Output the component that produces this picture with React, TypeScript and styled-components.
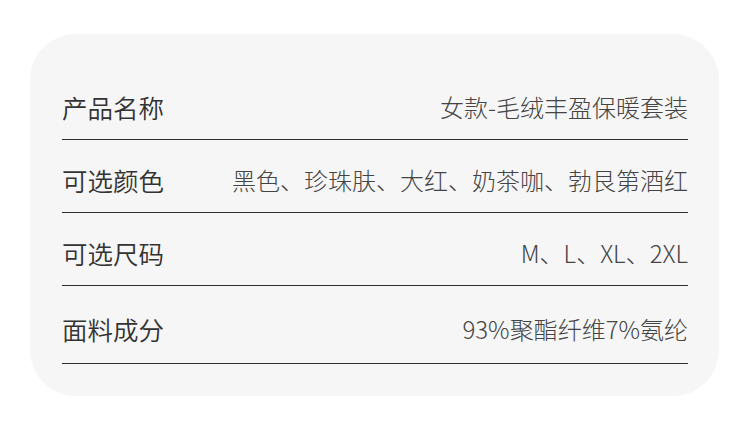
import React from "react";
import styled, { createGlobalStyle } from "styled-components";

interface SpecItem {
  label: string;
  value: string;
}

const specs: SpecItem[] = [
  { label: "产品名称", value: "女款-毛绒丰盈保暖套装" },
  { label: "可选颜色", value: "黑色、珍珠肤、大红、奶茶咖、勃艮第酒红" },
  { label: "可选尺码", value: "M、L、XL、2XL" },
  { label: "面料成分", value: "93%聚酯纤维7%氨纶" },
];

const App: React.FC = () => {
  return (
    <>
      <GlobalStyle />
      <Page>
        <Card>
          {specs.map((item, i) => (
            <Row key={item.label} last={i === specs.length - 1}>
              <Label>{item.label}</Label>
              <Value>{item.value}</Value>
            </Row>
          ))}
        </Card>
      </Page>
    </>
  );
};

/* ================== STYLED COMPONENTS ================== */

const GlobalStyle = createGlobalStyle`
  html, body {
    margin: 0;
    padding: 0;
    background: #ffffff;
  }
  body {
    font-family: "Noto Sans CJK SC", "Noto Sans", sans-serif;
  }
`;

const Page = styled.div`
  width: 750px;
  height: 423px;
  padding: 34px 31px 0 30px;
  box-sizing: border-box;
`;

const Card = styled.div`
  background: #f6f6f6;
  border-radius: 46px;
  padding: 33px 31px 32px 32px;
  height: 362px;
  box-sizing: border-box;
`;

const Row = styled.div<{ last: boolean }>`
  display: flex;
  align-items: center;
  justify-content: space-between;
  padding: ${({ last }) => (last ? "30px 0 21px" : "27px 0 19px")};
  border-bottom: 1px solid #2e2e2e;
  line-height: 26px;
  height: 26px;
  box-sizing: content-box;
`;

const Label = styled.span`
  font-size: 25.5px;
  color: #333333;
  font-weight: 350;
  white-space: nowrap;
`;

const Value = styled.span`
  font-size: 24px;
  color: #444444;
  font-weight: 300;
  white-space: nowrap;
`;

export default App;
